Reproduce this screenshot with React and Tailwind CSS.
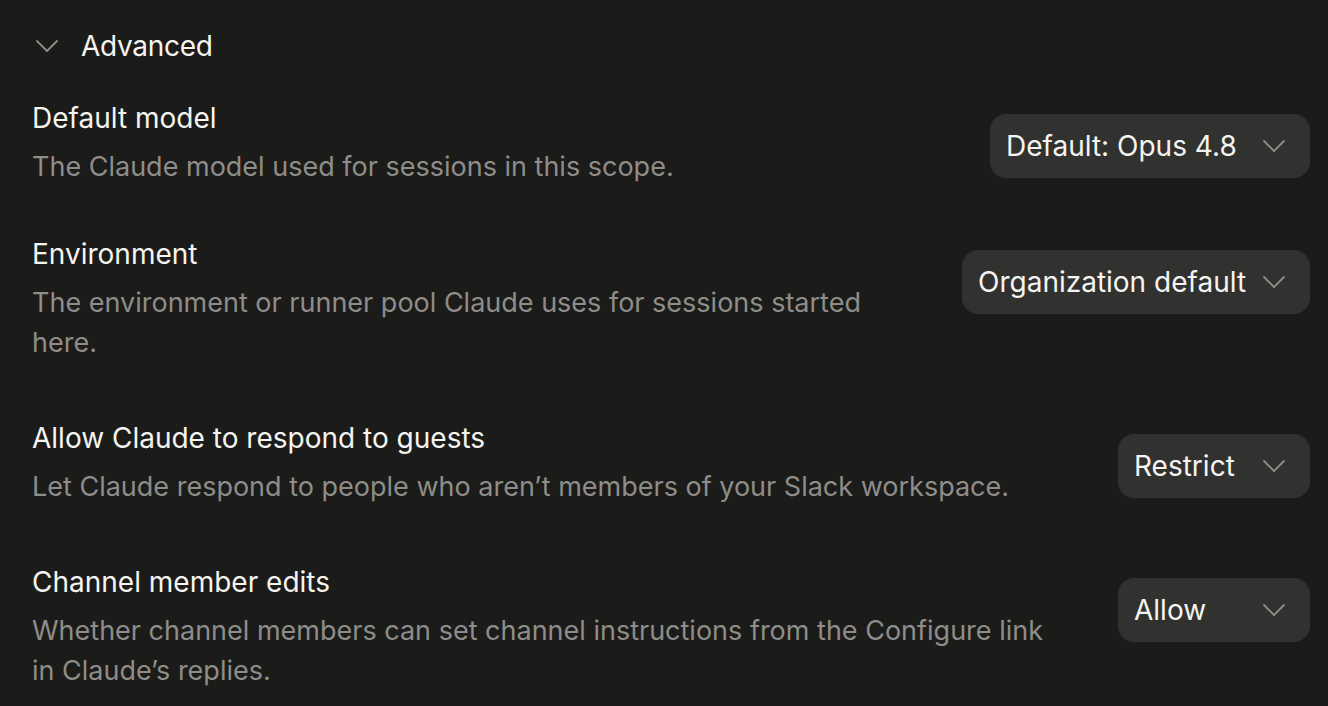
import { ChevronDown } from "lucide-react";

const rows = [
    {
        title: "Default model",
        description: "The Claude model used for sessions in this scope.",
        value: "Default: Opus 4.8",
        width: "w-[320px]",
    },
    {
        title: "Environment",
        description:
            "The environment or runner pool Claude uses for sessions started here.",
        value: "Organization default",
        width: "w-[348px]",
        extra: "mt-[47px]",
    },
    {
        title: "Allow Claude to respond to guests",
        description:
            "Let Claude respond to people who aren\u2019t members of your Slack workspace.",
        value: "Restrict",
        width: "w-[192px]",
        extra: "mt-[55px]",
    },
    {
        title: "Channel member edits",
        description:
            "Whether channel members can set channel instructions from the Configure link in Claude\u2019s replies.",
        value: "Allow",
        width: "w-[192px]",
        extra: "mt-[55px]",
    },
];

function Select({ value, width }) {
    return (
        <button
            className={`mt-4 flex h-16 shrink-0 items-center justify-between rounded-2xl bg-[#313130] pl-4 pr-4 text-[28px] leading-10 text-[#f5f4f0] ${width}`}
        >
            <span className="whitespace-nowrap">{value}</span>
            <ChevronDown
                className="h-10 w-10 shrink-0 text-[#8d8c88]"
                strokeWidth={1.1}
            />
        </button>
    );
}

export default function App() {
    return (
        <main
            className="min-h-[706px] w-full bg-[#1b1b1a] pl-8 pr-[18px] pt-[26px] text-[#f5f4f0] antialiased"
            style={{ fontFamily: "Inter, 'Noto Sans', sans-serif" }}
        >
            {/* Section header */}
            <div className="-ml-[5px] flex h-10 items-center gap-[14px]">
                <ChevronDown
                    className="h-10 w-10 text-[#8d8c88]"
                    strokeWidth={1.1}
                />
                <span className="text-[28px] tracking-[-0.01em]">Advanced</span>
            </div>

            <div className="mt-[32px]">
                {rows.map((row) => (
                    <div
                        key={row.title}
                        className={`flex items-start justify-between gap-16 ${row.extra || ""}`}
                    >
                        <div className="min-w-0 flex-1">
                            <div className="text-[28px] leading-10 text-[#f5f4f0]">
                                {row.title}
                            </div>
                            <p className="mt-[9px] text-[27px] leading-10 text-[#8e8d89]">
                                {row.description}
                            </p>
                        </div>
                        <Select value={row.value} width={row.width} />
                    </div>
                ))}
            </div>
        </main>
    );
}
